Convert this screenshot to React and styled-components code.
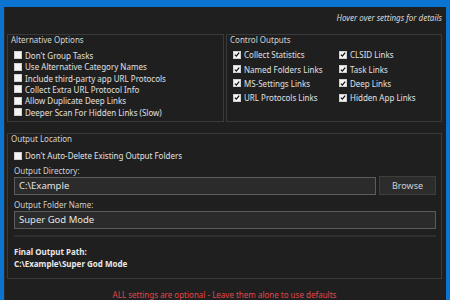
import styled, { createGlobalStyle } from "styled-components"

const GlobalStyle = createGlobalStyle`
    html, body {
        margin: 0;
        padding: 0;
        background: #0a74d0;
        overflow: hidden;
    }
    * {
        box-sizing: border-box;
    }
`

const alternative = [
    "Don't Group Tasks",
    "Use Alternative Category Names",
    "Include third-party app URL Protocols",
    "Collect Extra URL Protocol Info",
    "Allow Duplicate Deep Links",
    "Deeper Scan For Hidden Links (Slow)",
]

const outputs = [
    "Collect Statistics",
    "CLSID Links",
    "Named Folders Links",
    "Task Links",
    "MS-Settings Links",
    "Deep Links",
    "URL Protocols Links",
    "Hidden App Links",
]

function Check({ checked, label }) {
    return (
        <CheckRow>
            <Box>
                {checked && (
                    <svg width="7" height="7" viewBox="0 0 7 7">
                        <path d="M1 3.6 L2.8 5.4 L6 1.4" fill="none" stroke="#111" strokeWidth="1.5" />
                    </svg>
                )}
            </Box>
            <span>{label}</span>
        </CheckRow>
    )
}

export default function App() {
    return (
        <>
            <GlobalStyle />
            <Window>
                <Hint>Hover over settings for details</Hint>
                <TopRow>
                    <Group>
                        <Title>Alternative Options</Title>
                        <AltList>
                            {alternative.map((a) => (
                                <Check key={a} label={a} />
                            ))}
                        </AltList>
                    </Group>
                    <Group>
                        <Title>Control Outputs</Title>
                        <OutputGrid>
                            {outputs.map((o) => (
                                <Check key={o} label={o} checked />
                            ))}
                        </OutputGrid>
                    </Group>
                </TopRow>
                <LocationGroup>
                    <Title>Output Location</Title>
                    <LocationBody>
                        <Check label="Don't Auto-Delete Existing Output Folders" />
                        <Label>Output Directory:</Label>
                        <InputRow>
                            <Input>C:\Example</Input>
                            <Button>Browse</Button>
                        </InputRow>
                        <Label>Output Folder Name:</Label>
                        <Input>Super God Mode</Input>
                        <Separator />
                        <Strong>Final Output Path:</Strong>
                        <Strong>C:\Example\Super God Mode</Strong>
                    </LocationBody>
                </LocationGroup>
                <Warning>ALL settings are optional - Leave them alone to use defaults</Warning>
            </Window>
        </>
    )
}

const Window = styled.div`
    margin: 7px 0 0 4px;
    width: 442px;
    height: 293px;
    background: #1f1f1f;
    border-left: 1px solid #2b2b2b;
    padding: 0 4px 0 2px;
    font-family: "Noto Sans", "Open Sans", sans-serif;
    font-size: 8px;
    color: #dcdcdc;
    display: flex;
    flex-direction: column;
`

const Hint = styled.div`
    height: 27px;
    line-height: 20px;
    padding-top: 1px;
    text-align: right;
    font-style: italic;
    color: #d8d8d8;
`

const TopRow = styled.div`
    display: grid;
    grid-template-columns: 217px 216px;
    gap: 2px;
    height: 90px;
`

const Group = styled.div`
    border: 1px solid #3a3a3a;
    padding: 0 0 0 3px;
`

const Title = styled.div`
    line-height: 10px;
    color: #d4d4d4;
`

const AltList = styled.div`
    display: grid;
    grid-auto-rows: 11.4px;
    padding: 5px 0 0 3px;
`

const OutputGrid = styled.div`
    display: grid;
    grid-template-columns: 106px 1fr;
    grid-auto-rows: 14.3px;
    padding: 3px 0 0 3px;
`

const CheckRow = styled.label`
    display: flex;
    align-items: center;
    gap: 3px;
    white-space: nowrap;
    color: #e0e0e0;
`

const Box = styled.span`
    width: 8px;
    height: 8px;
    flex: none;
    background: #f4f4f4;
    border: 1px solid #d0d0d0;
    display: flex;
    align-items: center;
    justify-content: center;
`

const LocationGroup = styled(Group)`
    margin-top: 11px;
    height: 148px;
`

const LocationBody = styled.div`
    display: flex;
    flex-direction: column;
    padding: 6px 5px 0 3px;
    ${CheckRow} {
        height: 11px;
    }
`

const Label = styled.div`
    margin-top: 4px;
    line-height: 11px;
    color: #cfcfcf;
`

const InputRow = styled.div`
    display: flex;
    gap: 3px;
`

const Input = styled.div`
    flex: 1;
    height: 18px;
    margin-top: 1px;
    background: #2b2b2b;
    border: 1px solid #5c5c5c;
    padding: 0 4px;
    line-height: 16px;
    font-size: 9.5px;
    color: #e4e4e4;
`

const Button = styled.div`
    width: 57px;
    height: 19px;
    background: #2c2c2c;
    border: 1px solid #3e3e3e;
    text-align: center;
    line-height: 17px;
    font-size: 9px;
    color: #cfcfcf;
`

const Separator = styled.div`
    height: 2px;
    margin: 6px 0 9px;
    background: #2e2e2e;
`

const Strong = styled.div`
    font-weight: 700;
    line-height: 12px;
    color: #e8e8e8;
`

const Warning = styled.div`
    margin-top: 11px;
    text-align: center;
    color: #e0474c;
    line-height: 10px;
`
